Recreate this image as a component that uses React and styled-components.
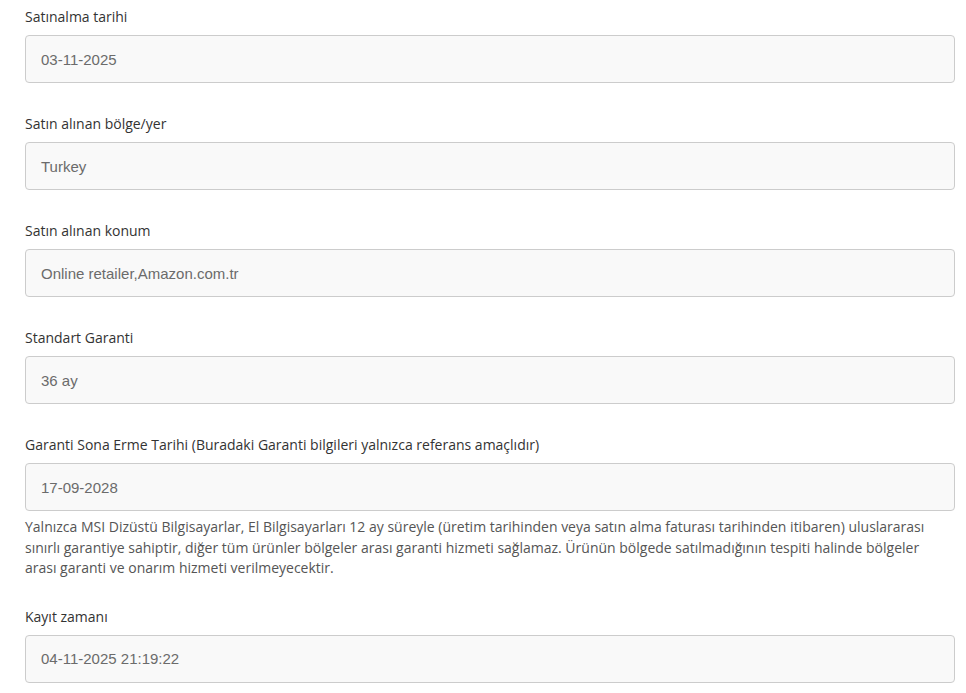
import React from 'react';
import styled, { createGlobalStyle } from 'styled-components';

const GlobalStyle = createGlobalStyle`
  html, body {
    margin: 0;
    padding: 0;
    background: #fff;
  }
`;

const Form = styled.div`
  padding: 7px 11px 0 25px;
  font-family: "Open Sans", "Noto Sans", sans-serif;
`;

const Field = styled.div`
  margin-bottom: ${(p) => (p.$tight ? '6px' : '31px')};
`;

const Label = styled.div`
  font-size: 14px;
  line-height: 20px;
  color: #333;
  margin-bottom: 8px;
`;

const Input = styled.div`
  box-sizing: border-box;
  height: 48px;
  display: flex;
  align-items: center;
  padding: 0 15px;
  background: #f9f9f9;
  border: 1px solid #ccc;
  border-radius: 4px;
  font-family: "Liberation Sans", Arial, sans-serif;
  font-size: 15px;
  color: #6b6b6b;
`;

const Help = styled.p`
  margin: 0 0 28px;
  padding-right: 16px;
  font-size: 14px;
  line-height: 20.5px;
  color: #555;
`;

const fields = [
  { label: 'Satınalma tarihi', value: '03-11-2025' },
  { label: 'Satın alınan bölge/yer', value: 'Turkey' },
  { label: 'Satın alınan konum', value: 'Online retailer,Amazon.com.tr' },
  { label: 'Standart Garanti', value: '36 ay' },
];

const App = () => (
  <>
    <GlobalStyle />
    <Form>
      {fields.map((f) => (
        <Field key={f.label}>
          <Label>{f.label}</Label>
          <Input>{f.value}</Input>
        </Field>
      ))}
      <Field $tight>
        <Label>Garanti Sona Erme Tarihi (Buradaki Garanti bilgileri yalnızca referans amaçlıdır)</Label>
        <Input>17-09-2028</Input>
      </Field>
      <Help>
        Yalnızca MSI Dizüstü Bilgisayarlar, El Bilgisayarları 12 ay süreyle (üretim tarihinden veya satın alma faturası tarihinden itibaren) uluslararası sınırlı garantiye sahiptir, diğer tüm ürünler bölgeler arası garanti hizmeti sağlamaz. Ürünün bölgede satılmadığının tespiti halinde bölgeler arası garanti ve onarım hizmeti verilmeyecektir.
      </Help>
      <Field>
        <Label>Kayıt zamanı</Label>
        <Input>04-11-2025 21:19:22</Input>
      </Field>
    </Form>
  </>
);

export default App;
